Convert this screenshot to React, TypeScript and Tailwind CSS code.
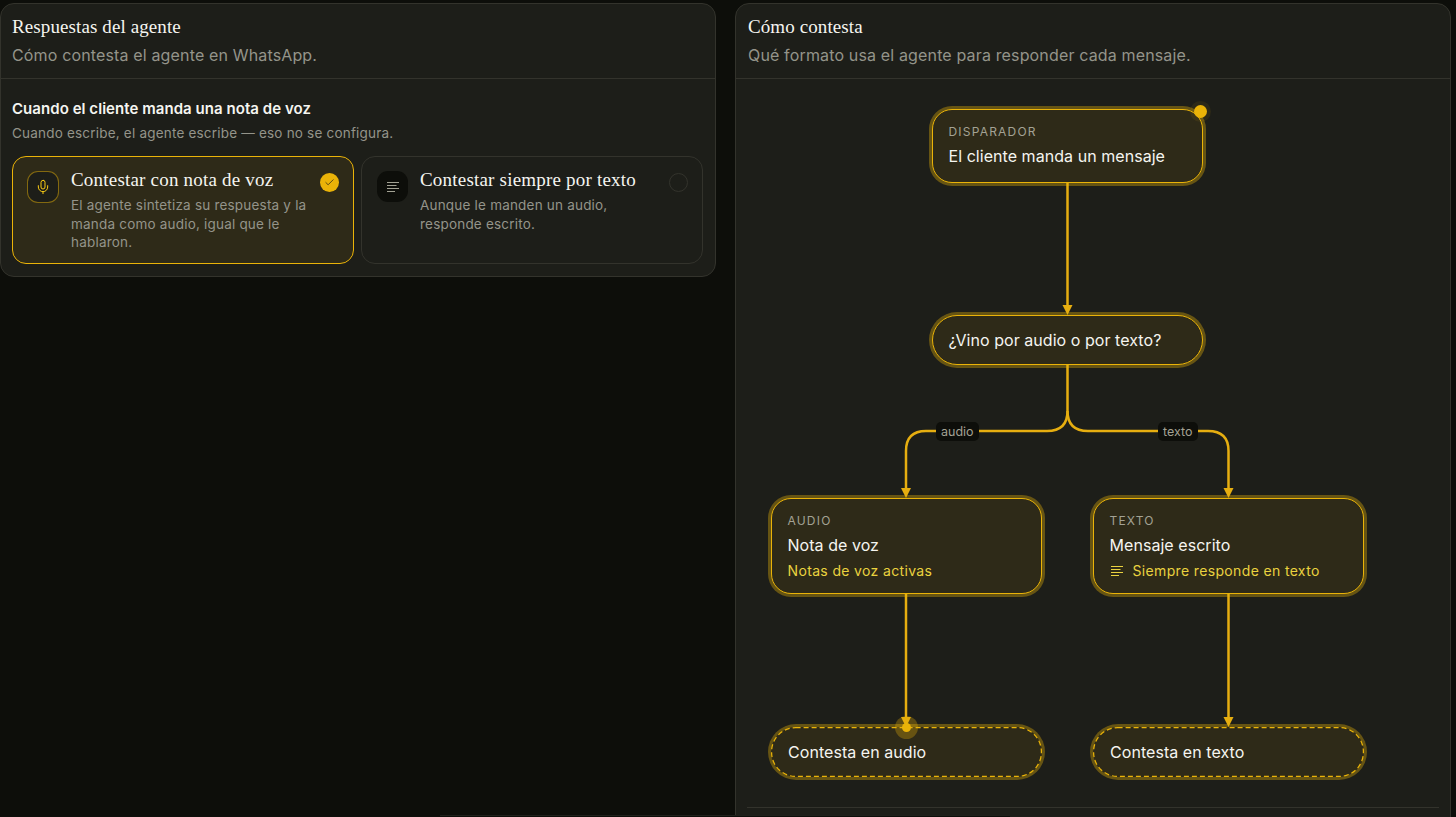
import { Check, Mic } from "lucide-react";

const inter = "font-['Inter',sans-serif]";
const serif = "font-['Liberation_Serif',serif]";

function TextLines({ className }: { className: string }) {
  return (
    <svg width="14" height="14" viewBox="0 0 14 14" fill="none" stroke="currentColor" strokeWidth="1.2" className={className}>
      <path d="M1 2.5H13M1 5.5H10.5M1 8.5H13M1 11.5H9" />
    </svg>
  );
}

function Dashed() {
  return (
    <svg className="absolute inset-0 h-full w-full overflow-visible" fill="none">
      <rect
        x="0.6"
        y="0.6"
        width="269.8"
        height="48.8"
        rx="24"
        stroke="#eab308"
        strokeWidth="1.25"
        strokeDasharray="5 3"
      />
    </svg>
  );
}

function Node({
  className,
  eyebrow,
  title,
  children,
}: {
  className: string;
  eyebrow?: string;
  title: string;
  children?: React.ReactNode;
}) {
  return (
    <div
      className={`absolute flex w-[271px] flex-col rounded-[20px] border-[1.5px] border-[#eab308] bg-[#2e2a18] px-[15.5px] shadow-[0_0_0_3px_rgba(234,179,8,0.36)] ${
        eyebrow ? "justify-start pt-[13.5px]" : "justify-center"
      } ${className}`}
    >
      {eyebrow && (
        <div className="text-[12px] leading-[16px] tracking-[0.1em] text-[#a3a294]">{eyebrow}</div>
      )}
      <div className={`text-[16px] leading-[20px] tracking-[0.05px] text-[#f5f5f0] ${eyebrow ? "mt-[6px]" : ""}`}>
        {title}
      </div>
      {children}
    </div>
  );
}

function Terminal({ className, title }: { className: string; title: string }) {
  return (
    <div
      className={`absolute flex h-[50px] w-[271px] items-center rounded-[25px] bg-[#2e2a18] px-[17px] shadow-[0_0_0_3px_rgba(234,179,8,0.36)] ${className}`}
    >
      <Dashed />
      <span className="relative text-[16px] tracking-[0.05px] text-[#f5f5f0]">{title}</span>
    </div>
  );
}

function Diagram() {
  return (
    <div className="relative h-[728px]">
      <svg className="absolute inset-0 h-full w-full" fill="none">
        <g stroke="#e6ae10" strokeWidth="2.5">
          <path d="M331.5 103V228" />
          <path d="M331.5 285V332Q331.5 352 311 352H190Q170 352 170 372V410" />
          <path d="M331.5 332Q331.5 352 352 352H472Q492.5 352 492.5 372V410" />
          <path d="M170 515V640" />
          <path d="M492.5 515V640" />
        </g>
        <g fill="#e6ae10">
          <path d="M326.5 226H336.5L331.5 236Z" />
          <path d="M165 409H175L170 419Z" />
          <path d="M487.5 409H497.5L492.5 419Z" />
          <path d="M165 638H175L170 648Z" />
          <path d="M487.5 638H497.5L492.5 648Z" />
        </g>
      </svg>

      <Node className="top-[30px] left-[196px] h-[74px]" eyebrow="DISPARADOR" title="El cliente manda un mensaje" />
      <div className="absolute top-[26px] left-[458px] h-[13px] w-[13px] rounded-full bg-[#eab308] shadow-[0_0_0_4px_rgba(234,179,8,0.08)]" />

      <Node className="top-[236px] left-[196px] h-[50px] !rounded-[25px]" title="¿Vino por audio o por texto?" />

      <span className="absolute top-[343px] left-[200px] rounded-[5px] bg-[#0d0e0a] px-[5px] text-[12.5px] leading-[19px] text-[#a3a294]">
        audio
      </span>
      <span className="absolute top-[343px] left-[422px] rounded-[5px] bg-[#0d0e0a] px-[5px] text-[12.5px] leading-[19px] text-[#a3a294]">
        texto
      </span>

      <Node className="top-[419px] left-[35px] h-[96px]" eyebrow="AUDIO" title="Nota de voz">
        <div className="mt-[6px] text-[14px] leading-[20px] tracking-[0.35px] text-[#ead23f]">Notas de voz activas</div>
      </Node>
      <Node className="top-[419px] left-[357px] h-[96px]" eyebrow="TEXTO" title="Mensaje escrito">
        <div className="mt-[6px] flex items-center gap-[9px] text-[14px] leading-[20px] tracking-[0.35px] text-[#ead23f]">
          <TextLines className="shrink-0" />
          Siempre responde en texto
        </div>
      </Node>

      <Terminal className="top-[648px] left-[35px]" title="Contesta en audio" />
      <Terminal className="top-[648px] left-[357px]" title="Contesta en texto" />

      <div className="absolute top-[637px] left-[159px] h-[23px] w-[23px] rounded-full bg-[#eab308]/30" />
      <div className="absolute top-[644px] left-[166px] h-[9px] w-[9px] rounded-full bg-[#eab308]" />
    </div>
  );
}

export default function App() {
  return (
    <div className={`relative h-[817px] overflow-hidden bg-[#0d0e0a] pt-[3px] ${inter}`}>
      <div className="grid grid-cols-[716px_716px] gap-x-[19px]">
        {/* Respuestas */}
        <section className="self-start rounded-[14px] border border-[#33332c] bg-[#1d1e19]">
          <header className="h-[75px] border-b border-[#33332c] px-[11px] pt-[12px]">
            <h2 className={`text-[19px] leading-[22px] tracking-[0.1px] text-[#f5f5f0] ${serif}`}>Respuestas del agente</h2>
            <p className="mt-[7px] text-[16px] leading-[20px] tracking-[0.15px] text-[#94948a]">
              Cómo contesta el agente en WhatsApp.
            </p>
          </header>
          <div className="px-[11px] pt-[20px] pb-[12px]">
            <h3 className="text-[15px] leading-[20px] font-semibold tracking-[0.05px] text-[#f5f5f0]">
              Cuando el cliente manda una nota de voz
            </h3>
            <p className="mt-[5px] text-[13.5px] leading-[18px] tracking-[0.2px] text-[#94948a]">
              Cuando escribe, el agente escribe — eso no se configura.
            </p>
            <div className="mt-[14px] grid grid-cols-[342px_342px] gap-[7px]">
              <div className="flex h-[108px] gap-[12px] rounded-[14px] border border-[#eab308] bg-[#2e2a18] px-[14px] pt-[14px]">
                <div className="flex h-[32px] w-[32px] shrink-0 items-center justify-center rounded-[11px] border border-[#eab308]/50 bg-[#1d1e19]">
                  <Mic size={16} strokeWidth={1.5} className="text-[#facc15]" />
                </div>
                <div className="-mt-[1px] min-w-0 flex-1">
                  <div className={`text-[19px] leading-[20px] tracking-[0.2px] text-[#f5f5f0] ${serif}`}>
                    Contestar con nota de voz
                  </div>
                  <p className="mt-[6px] text-[13.5px] leading-[18.5px] tracking-[0.2px] text-[#94948a]">
                    El agente sintetiza su respuesta y la manda como audio, igual que le hablaron.
                  </p>
                </div>
                <div className="mt-[2px] flex h-[19px] w-[19px] shrink-0 items-center justify-center rounded-full bg-[#eab308]">
                  <Check size={11} strokeWidth={1.5} className="text-[#1d1e19]" />
                </div>
              </div>
              <div className="flex h-[108px] gap-[12px] rounded-[14px] border border-[#33332c] pt-[14px] pr-[14px] pl-[15px]">
                <div className="flex h-[31px] w-[31px] shrink-0 items-center justify-center rounded-[11px] bg-[#0d0e0a]">
                  <TextLines className="text-[#a3a294]" />
                </div>
                <div className="-mt-[1px] min-w-0 flex-1">
                  <div className={`text-[19px] leading-[20px] tracking-[0.2px] text-[#f5f5f0] ${serif}`}>
                    Contestar siempre por texto
                  </div>
                  <p className="mt-[6px] text-[13.5px] leading-[18.5px] tracking-[0.2px] text-[#94948a]">
                    Aunque le manden un audio, responde escrito.
                  </p>
                </div>
                <div className="mt-[2px] h-[19px] w-[19px] shrink-0 rounded-full border border-[#33332c]" />
              </div>
            </div>
          </div>
        </section>

        {/* Como contesta */}
        <section className="h-[840px] rounded-[14px] border border-[#33332c] bg-[#1d1e19]">
          <header className="h-[75px] border-b border-[#33332c] px-[12px] pt-[12px]">
            <h2 className={`text-[19px] leading-[22px] tracking-[0.1px] text-[#f5f5f0] ${serif}`}>Cómo contesta</h2>
            <p className="mt-[7px] text-[16px] leading-[20px] tracking-[0.15px] text-[#94948a]">
              Qué formato usa el agente para responder cada mensaje.
            </p>
          </header>
          <Diagram />
          <div className="mx-[11px] border-t border-[#33332c]" />
        </section>
      </div>
      {/* floating bar just peeking in at the bottom */}
      <div className="absolute bottom-0 left-[440px] h-[2px] w-[570px] border-t border-[#1f201b] bg-[#0d0e0a]" />
    </div>
  );
}
